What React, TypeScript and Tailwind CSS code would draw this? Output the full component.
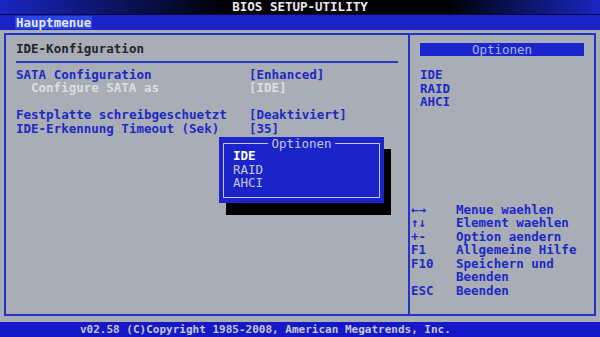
const font = { fontFamily: '"DejaVu Sans Mono", "Liberation Mono", monospace' };

const settings = [
  { label: "SATA Configuration", value: "[Enhanced]", sub: false },
  { label: "Configure SATA as", value: "[IDE]", sub: true },
  { label: "", value: "", sub: false },
  { label: "Festplatte schreibgeschuetzt", value: "[Deaktiviert]", sub: false },
  { label: "IDE-Erkennung Timeout (Sek)", value: "[35]", sub: false },
];

const help = [
  { key: "←→", text: "Menue waehlen" },
  { key: "↑↓", text: "Element waehlen" },
  { key: "+-", text: "Option aendern" },
  { key: "F1", text: "Allgemeine Hilfe" },
  { key: "F10", text: "Speichern und" },
  { key: "", text: "Beenden" },
  { key: "ESC", text: "Beenden" },
];

export default function App() {
  return (
    <div
      className="relative flex h-[337px] w-[600px] flex-col overflow-hidden bg-[#a9adb6] text-[12.5px] leading-[13.5px] font-bold"
      style={font}
    >
      <div className="flex h-[14px] items-center justify-center bg-[linear-gradient(90deg,#1a26c4_0%,#000_38%,#000_74%,#1a26c4_100%)] text-[#e8e8ee]">
        BIOS SETUP-UTILITY
      </div>
      <div className="flex h-[16px] items-center border-t border-[#050a40] bg-[#1a22c8] pl-[15px]">
        <span className="bg-[#2a44e6] px-[1px] text-[#e6e8ff]">Hauptmenue</span>
      </div>

      <div className="flex-1 px-[4px] pt-[3px] pb-[6px]">
        <div className="flex h-full border-2 border-[#2434c4]">
          <div className="flex w-[404px] flex-col border-r-2 border-[#2434c4] pl-[10px] pt-[7px]">
            <div className="text-[#22242e]">IDE-Konfiguration</div>
            <div className="mt-[5px] mb-[5px] mr-[10px] h-[2px] bg-[#2a3ac8]" />
            {settings.map((s, i) => (
              <div key={i} className="flex h-[13.5px]">
                <span className={`w-[233px] ${s.sub ? "pl-[15px] text-[#dcdde4]" : "text-[#1c2ac4]"}`}>{s.label}</span>
                <span className={s.sub ? "text-[#dcdde4]" : "text-[#1c2ac4]"}>{s.value}</span>
              </div>
            ))}
          </div>

          <div className="flex flex-1 flex-col pt-[8px] text-[#1c2ac4]">
            <div className="ml-[10px] mr-[10px] flex h-[13px] items-center justify-center bg-[#1a26cc] font-normal text-[#a9b8ec]">
              Optionen
            </div>
            <div className="mt-[12px] ml-[10px]">
              <div>IDE</div>
              <div>RAID</div>
              <div>AHCI</div>
            </div>
            <div className="mt-[94px] ml-[1px] flex flex-col">
              {help.map((h, i) => (
                <div key={i} className="flex h-[13.5px]">
                  <span className="w-[45px]">{h.key}</span>
                  <span>{h.text}</span>
                </div>
              ))}
            </div>
          </div>
        </div>
      </div>

      <div className="flex h-[15px] items-center bg-[#1618c8] pl-[80px] text-[11px] text-[#c4c8dc]">
        v02.58 (C)Copyright 1985-2008, American Megatrends, Inc.
      </div>

      <div className="absolute left-[219px] top-[137px] h-[66px] w-[165px] bg-[#1a24c8] px-[4px] pt-[6px] pb-[5px] shadow-[7px_12px_0_0_#000]">
        <div className="relative h-full border border-[#c4c8e4] pl-[9px] pt-[5px]">
          <div className="absolute left-0 right-0 -top-[6px] flex justify-center leading-[11px]">
            <span className="bg-[#1a24c8] px-[3px] font-normal text-[#c4c8e4]">Optionen</span>
          </div>
          <div className="text-white">IDE</div>
          <div className="font-normal text-[#c4c8e4]">RAID</div>
          <div className="font-normal text-[#c4c8e4]">AHCI</div>
        </div>
      </div>
    </div>
  );
}
